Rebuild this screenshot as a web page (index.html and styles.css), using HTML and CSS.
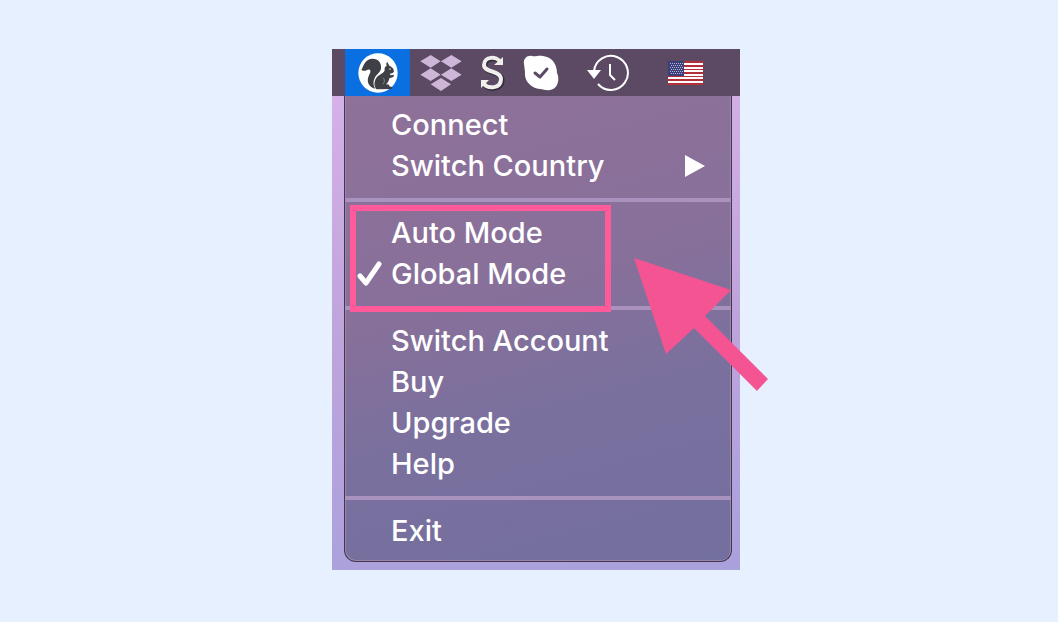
FILE: index.html
```html
<!DOCTYPE html>
<html lang="en">
<head>
<meta charset="utf-8">
<meta name="viewport" content="width=device-width, initial-scale=1">
<title>Menu bar</title>
<link rel="stylesheet" href="styles.css">
</head>
<body>
<main class="desktop">
  <header class="bar">
    <button class="bar-item bar-item-active" aria-label="VPN" aria-expanded="true">
      <svg width="40" height="40" viewBox="98 32 120 120"><circle cx="158" cy="92" r="59" fill="#fff"/><path fill="#3f4045" d="M108 82C113 78 116 50 140 49C158 48 169 61 167 78C166 91 153 96 148 107C143 118 143 130 150 139C130 135 124 118 129 104C132 95 138 88 134 83C127 77 119 92 108 82Z"/><path fill="#3f4045" d="M152 139C145 130 146 113 157 102C166 94 177 92 178 83C177 76 179 72 184 71C182 65 183 60 186 59L192 70C200 73 206 80 206 87C204 93 198 94 193 94L196 99L206 97L204 104L192 108C191 115 188 121 182 126C189 125 193 128 192 132L200 134C202 138 200 140 197 140L158 141C155 141 154 141 152 139Z"/><path d="M172 126C178 121 179 113 174 107" fill="none" stroke="#fff" stroke-width="1"/><circle cx="194" cy="80" r="2" fill="#fff"/></svg>
    </button>
    <button class="bar-item" aria-label="Dropbox">
      <svg width="42" height="36" viewBox="0 0 124 108" fill="#cdb6d8"><path d="M31 0L61 19L31 38L0 19ZM93 0L124 19L93 38L62 19ZM31 40L61 59L31 78L0 59ZM93 40L124 59L93 78L62 59ZM62 69L92 88L62 108L31 88Z"/></svg>
    </button>
    <button class="bar-item" aria-label="Sync">
      <svg width="26" height="36" viewBox="0 0 26 36"><path d="M21 8C18 2 4 2 5 11C5 19 22 16 22 25C22 35 9 35 5 30" fill="none" stroke="#332a3a" stroke-width="5"/><path d="M20 7C17 1 4 1 4 10C4 18 21 15 21 24C21 34 8 34 4 29" fill="none" stroke="#f1efec" stroke-width="4"/><path fill="#f1efec" d="M23 2V10H14ZM1 33V25L9 25Z"/></svg>
    </button>
    <button class="bar-item" aria-label="Skype">
      <svg width="36" height="36" viewBox="0 0 36 36"><path fill="#fff" d="M1 9C0 4 4 0 9 1C13 2 15 0 20 1C29 2 34 9 34 18C37 24 35 34 27 35C22 36 21 34 17 34C8 33 1 26 2 17Z"/><path d="M12 18L17 22L24 14" fill="none" stroke="#5c4a64" stroke-width="3" stroke-linecap="round" stroke-linejoin="round"/></svg>
    </button>
    <button class="bar-item" aria-label="Time Machine">
      <svg width="42" height="38" viewBox="0 0 42 38" fill="none" stroke="#fff" stroke-width="2"><path d="M7 17A17 17 0 1 1 11 30"/><path d="M23 10V21L28 26"/><path d="M0 16H14L7 25Z" fill="#fff" stroke="none"/></svg>
    </button>
    <button class="bar-item" aria-label="U.S. keyboard">
      <svg width="35" height="24" viewBox="0 0 35 24"><path fill="#b52f38" d="M0 0H35V24H0Z"/><path d="M0 3H35M0 7H35M0 10H35M0 14H35M0 17H35M0 21H35" stroke="#fff" stroke-width="2"/><path fill="#3d3f7b" d="M0 0H16V15H0Z"/><g stroke="#b5b5d5" stroke-width="1" stroke-dasharray="1 1"><path d="M2 2.5H15M3 4.5H15M2 6.5H15M3 8.5H15M2 10.5H15M3 12.5H15"/></g></svg>
    </button>
  </header>
  <nav class="menu" role="menu" aria-label="VPN menu">
    <div class="group group-first" role="group">
      <button class="item" role="menuitem">Connect</button>
      <button class="item" role="menuitem" aria-haspopup="menu">Switch Country
        <svg class="chevron" width="20" height="22" viewBox="0 0 20 22" fill="#fff" aria-hidden="true"><path d="M0 0L20 11L0 22Z"/></svg>
      </button>
    </div>
    <div class="group group-marked" role="group" aria-label="Mode">
      <button class="item" role="menuitemradio" aria-checked="false">Auto Mode</button>
      <button class="item" role="menuitemradio" aria-checked="true"><svg class="check" width="26" height="26" viewBox="0 0 26 26" aria-hidden="true"><path d="M3 15L9 22L22 3" fill="none" stroke="#fff" stroke-width="5" stroke-linecap="round" stroke-linejoin="round"/></svg>Global Mode</button>
      <span class="frame"></span>
      <svg class="arrow" width="134" height="133" viewBox="0 0 134 133" aria-hidden="true"><path fill="#f55493" d="M0 0L97 32L71 58L134 121L123 133L60 70L32 96Z"/></svg>
    </div>
    <div class="group" role="group">
      <button class="item" role="menuitem">Switch Account</button>
      <button class="item" role="menuitem">Buy</button>
      <button class="item" role="menuitem">Upgrade</button>
      <button class="item" role="menuitem">Help</button>
    </div>
    <div class="group group-last" role="group">
      <button class="item" role="menuitem">Exit</button>
    </div>
  </nav>
</main>
</body>
</html>
```
FILE: styles.css
```css
* {
  box-sizing: border-box;
}

body {
  margin: 0;
  min-height: 100vh;
  padding: 49px 0 49px 14px;
  background: #e6f0ff;
  font-family: Inter, "Liberation Sans", sans-serif;
}

button {
  border: 0;
  padding: 0;
  background: none;
  color: inherit;
  font: inherit;
}

.desktop {
  width: 100%;
  max-width: 408px;
  margin: 0 auto;
  padding-bottom: 8px;
  background: linear-gradient(175deg, #d9b4ea, #c0a4dc 50%, #a9a1dc);
}

.bar {
  display: grid;
  grid-template-columns: 65px 61px 43px 54px 80px 74px;
  height: 47px;
  padding-left: 13px;
  background: #5c4a64;
}

.bar-item {
  display: flex;
  align-items: center;
  justify-content: center;
}

.bar-item-active {
  background: #0a6fe0;
}

.menu {
  margin: 0 8px 0 12px;
  border: 1px solid #41364b;
  border-top: 0;
  border-radius: 0 0 12px 12px;
  background: linear-gradient(165deg, #8f7199, #87709a 42%, #7a709e 65%, #736f9f);
  box-shadow: inset 1px -1px 0 #9b85ad, inset -1px 0 0 #9b85ad;
  color: #fff;
  font-size: 29px;
  font-weight: 500;
  line-height: 41px;
}

.group {
  display: flex;
  flex-direction: column;
  padding: 10px 0 12px;
  border-bottom: 4px solid #a992bd;
}

.group-first {
  padding-top: 8px;
}

.group-marked {
  position: relative;
}

.group-last {
  padding-bottom: 10px;
  border-bottom: 0;
}

.item {
  position: relative;
  display: flex;
  align-items: center;
  justify-content: space-between;
  padding: 0 26px 0 46px;
  text-align: left;
}

.check {
  position: absolute;
  left: 12px;
  top: 8px;
}

.frame {
  position: absolute;
  top: 3px;
  bottom: -6px;
  left: 5px;
  width: 261px;
  border: 6px solid #ff5b9b;
}

.arrow {
  position: absolute;
  top: 56px;
  left: 289px;
}
```
